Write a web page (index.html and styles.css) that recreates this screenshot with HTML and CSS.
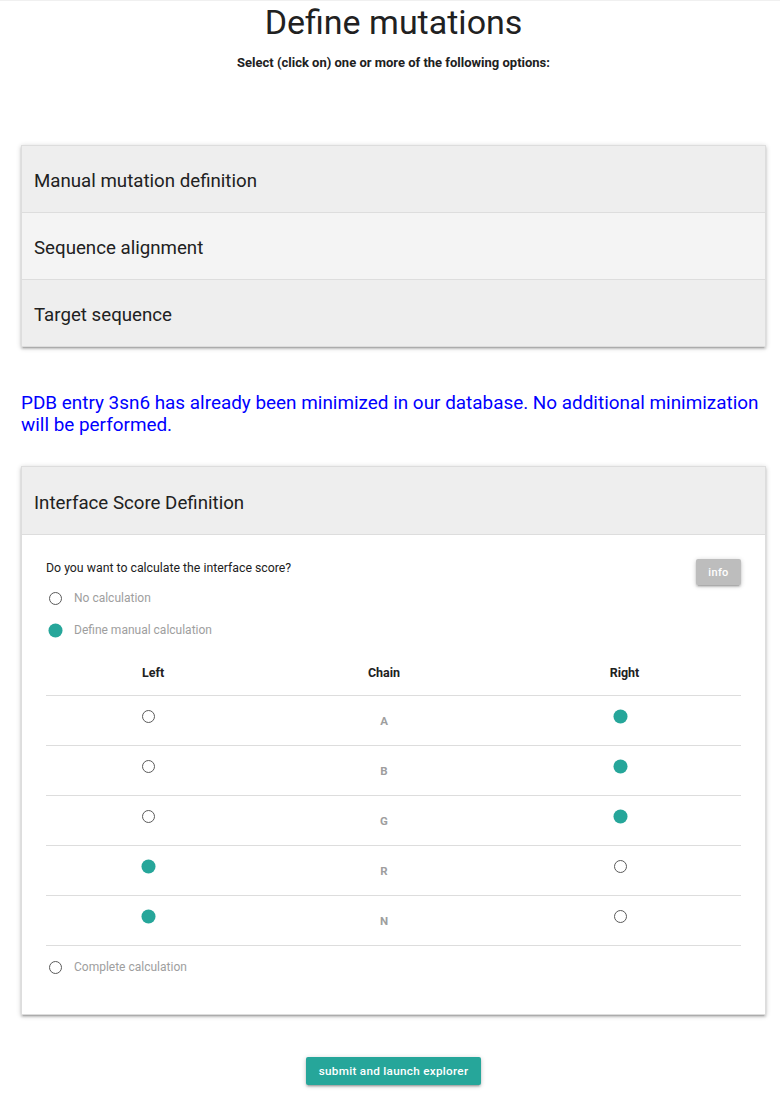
FILE: index.html
```html
<!DOCTYPE html>
<html>
<head>
<meta charset="utf-8">
<link rel="stylesheet" href="styles.css">
</head>
<body>
<div class="container">
  <h1 class="title">Define mutations</h1>
  <p class="subtitle">Select (click on) one or more of the following options:</p>

  <div class="card collapsible">
    <div class="c-header">Manual mutation definition</div>
    <div class="c-header light">Sequence alignment</div>
    <div class="c-header last">Target sequence</div>
  </div>

  <p class="notice">PDB entry 3sn6 has already been minimized in our database. No additional minimization will be performed.</p>

  <div class="card score">
    <div class="c-header">Interface Score Definition</div>
    <div class="c-body">
      <div class="question-row">
        <span class="question">Do you want to calculate the interface score?</span>
        <button class="info-btn">info</button>
      </div>
      <div class="radio-list">
        <div class="radio-row"><span class="radio"></span><span class="radio-label">No calculation</span></div>
        <div class="radio-row"><span class="radio checked"></span><span class="radio-label">Define manual calculation</span></div>
      </div>
      <div class="chain-table">
        <div class="t-row t-head">
          <div class="cell">Left</div>
          <div class="cell">Chain</div>
          <div class="cell">Right</div>
        </div>
        <div class="t-row">
          <div class="cell"><span class="radio small"></span></div>
          <div class="cell chain">A</div>
          <div class="cell"><span class="radio small checked"></span></div>
        </div>
        <div class="t-row">
          <div class="cell"><span class="radio small"></span></div>
          <div class="cell chain">B</div>
          <div class="cell"><span class="radio small checked"></span></div>
        </div>
        <div class="t-row">
          <div class="cell"><span class="radio small"></span></div>
          <div class="cell chain">G</div>
          <div class="cell"><span class="radio small checked"></span></div>
        </div>
        <div class="t-row">
          <div class="cell"><span class="radio small checked"></span></div>
          <div class="cell chain">R</div>
          <div class="cell"><span class="radio small"></span></div>
        </div>
        <div class="t-row">
          <div class="cell"><span class="radio small checked"></span></div>
          <div class="cell chain">N</div>
          <div class="cell"><span class="radio small"></span></div>
        </div>
      </div>
      <div class="radio-row complete"><span class="radio"></span><span class="radio-label">Complete calculation</span></div>
    </div>
  </div>

  <div class="submit-wrap">
    <button class="submit-btn">submit and launch explorer</button>
  </div>
</div>
</body>
</html>
```

FILE: styles.css
```css
* { box-sizing: border-box; }

body {
  margin: 0;
  font-family: Roboto, "Liberation Sans", sans-serif;
  color: #212121;
  background: #fff;
  border-top: 1px solid #f0f0f0;
}

.container {
  margin-left: 21px;
  width: 745px;
  padding-bottom: 20px;
}

.title {
  margin: 0;
  font-size: 34px;
  font-weight: 400;
  line-height: 43px;
  text-align: center;
  color: #212121;
}

.subtitle {
  margin: 11px 0 0;
  font-size: 13px;
  font-weight: 700;
  line-height: 16px;
  text-align: center;
}

.card {
  background: #fff;
  border: 1px solid #ddd;
  border-bottom: none;
  box-shadow: 0 2px 2px 0 rgba(0,0,0,0.14), 0 3px 1px -2px rgba(0,0,0,0.12), 0 1px 5px 0 rgba(0,0,0,0.2);
}

.collapsible { margin-top: 74px; }

.c-header {
  height: 67px;
  display: flex;
  align-items: center;
  padding: 4px 12px 0;
  font-size: 18.7px;
  background: #eeeeee;
  border-bottom: 1px solid #ddd;
  color: #212121;
}

.c-header.light { background: #f4f4f4; }

.notice {
  margin: 45px 0 0;
  font-size: 18.9px;
  line-height: 22px;
  color: #0000ff;
}

.score { margin-top: 30px; }

.score .c-header { height: 68px; padding-top: 5px; }

.c-body {
  padding: 25px 24px 34px;
  border-bottom: 1px solid #ddd;
}

.question-row {
  display: flex;
  justify-content: space-between;
  align-items: flex-start;
}

.question {
  font-size: 12.3px;
  line-height: 16px;
  color: #212121;
}

.info-btn {
  width: 45px;
  height: 26px;
  border: none;
  border-radius: 2px;
  background: #bdbdbd;
  color: #fff;
  font-family: Roboto, "Liberation Sans", sans-serif;
  font-size: 11px;
  font-weight: 500;
  letter-spacing: 0.3px;
  padding: 0;
  margin-top: -1px;
  box-shadow: 0 2px 2px 0 rgba(0,0,0,0.14), 0 3px 1px -2px rgba(0,0,0,0.12), 0 1px 5px 0 rgba(0,0,0,0.2);
}

.radio-list {
  display: flex;
  flex-direction: column;
  gap: 6px;
}

.radio-row {
  height: 26px;
  display: flex;
  align-items: center;
  padding-left: 3px;
}

.radio-row.complete { margin-top: 8px; }

.radio {
  display: inline-block;
  width: 13px;
  height: 13px;
  border-radius: 50%;
  border: 1.5px solid #5a5a5a;
  flex: none;
}

.radio.checked {
  border: none;
  background: #26a69a;
  transform: scale(1.08);
}

.radio-label {
  margin-left: 12px;
  font-size: 12px;
  color: #9e9e9e;
}

.chain-table { margin-top: 8px; }

.t-row {
  display: grid;
  grid-template-columns: 214px 248px 233px;
  height: 50px;
  border-bottom: 1px solid #ddd;
  align-items: center;
}

.t-row.t-head {
  height: 45px;
}

.cell {
  text-align: center;
  font-size: 11px;
  line-height: 14px;
}

.t-head .cell {
  font-weight: 700;
  color: #212121;
  font-size: 12.5px;
}

.cell .radio {
  vertical-align: middle;
  margin-right: 9px;
  position: relative;
  top: -4px;
}

.chain {
  font-weight: 700;
  color: #9e9e9e;
  font-size: 11.5px;
}

.submit-wrap {
  display: flex;
  justify-content: center;
  margin-top: 42px;
}

.submit-btn {
  width: 175px;
  height: 28px;
  border: none;
  border-radius: 2px;
  background: #26a69a;
  color: #fff;
  font-family: Roboto, "Liberation Sans", sans-serif;
  font-size: 11.7px;
  font-weight: 500;
  letter-spacing: 0.3px;
  padding: 0;
  box-shadow: 0 2px 2px 0 rgba(0,0,0,0.14), 0 3px 1px -2px rgba(0,0,0,0.12), 0 1px 5px 0 rgba(0,0,0,0.2);
}
```
